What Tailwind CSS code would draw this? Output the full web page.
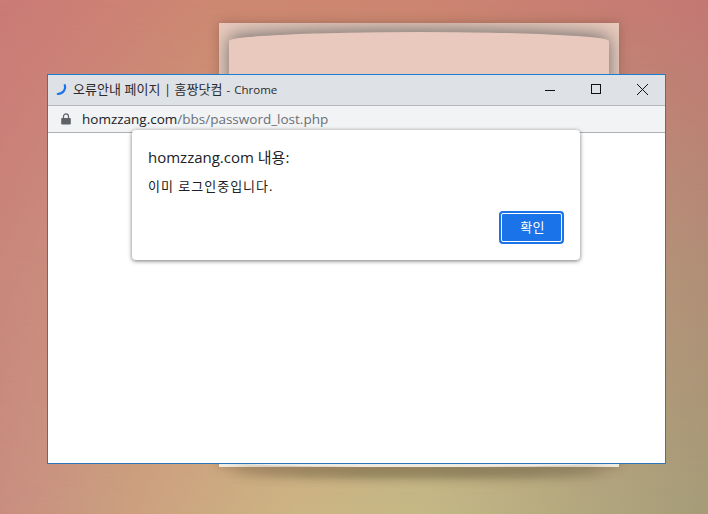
<!DOCTYPE html>
<html lang="ko">
<head>
    <meta charset="UTF-8">
    <title>오류안내 페이지 | 홈짱닷컴 - Chrome</title>
    <script src="https://cdn.jsdelivr.net/npm/@tailwindcss/browser@4"></script>
</head>
<body class="relative w-[708px] h-[514px] overflow-hidden font-['Open_Sans','Noto_Sans_CJK_KR',sans-serif] bg-[linear-gradient(90deg,#cb7a76_0%,#cd8872_30%,#cc8570_60%,#c47874_100%)]">
    <!-- wallpaper: lower half of the blend -->
    <div class="absolute inset-0 bg-[linear-gradient(90deg,#c88e80_0%,#cca580_24%,#ccb484_42%,#c4b886_60%,#b0a67e_85%,#a59c78_100%)] [mask-image:linear-gradient(180deg,transparent_0%,rgba(0,0,0,0.65)_55%,black_100%)]"></div>

    <!-- desktop page behind the window -->
    <div class="absolute left-[219px] top-[23px] w-[400px] h-[444px] bg-[#e9cabd] shadow-[0_0_10px_rgba(110,70,55,0.45)]">
        <div class="absolute inset-0 overflow-hidden">
            <div class="absolute left-[10px] right-[10px] top-[9px] h-[60px] bg-[#e9c9bd] rounded-t-[190px_9px] shadow-[0_-2px_18px_rgba(80,85,85,0.8)]"></div>
        </div>
        <div class="absolute inset-x-0 bottom-0 h-[5px] bg-[#f0ebe0]"></div>
        <div class="absolute left-[14px] right-[14px] bottom-0 h-[5px] rounded-b-[190px_6px] shadow-[0_8px_12px_rgba(50,45,25,0.85)]"></div>
    </div>

    <!-- browser window -->
    <div class="absolute left-[47px] top-[74px] w-[619px] h-[390px] flex flex-col bg-white border border-[#1c7ed0] border-b-[#2f76b8]">
        <div class="h-[31px] flex items-center bg-[#dee1e6] border-b border-[#b4b6ba] shrink-0">
            <svg class="ml-[8px] w-[12px] h-[12px]" viewBox="0 0 12 12" fill="none">
                <path d="M8.8 1.2c1.2 4-1.2 8.2-7 8.8" stroke="#1a73e8" stroke-width="2.2" stroke-linecap="round"/>
            </svg>
            <span class="ml-[5px] text-[13px] tracking-[0.05px] text-[#2b2b2b] whitespace-nowrap">오류안내 페이지 | 홈짱닷컴</span>
            <span class="ml-[4px] text-[11.5px] text-[#2b2b2b] whitespace-nowrap">-</span>
            <span class="ml-[4px] text-[11.5px] text-[#2b2b2b] whitespace-nowrap">Chrome</span>
            <div class="ml-auto flex items-center">
                <svg class="w-[46px] h-[30px]" viewBox="0 0 46 30"><path d="M17 15.5h10" stroke="#111" stroke-width="1"/></svg>
                <svg class="w-[46px] h-[30px]" viewBox="0 0 46 30"><rect x="17.5" y="9.5" width="9" height="9" fill="none" stroke="#111"/></svg>
                <svg class="w-[46px] h-[30px] mr-[-1px]" viewBox="0 0 46 30"><path d="M17 9l11 11M28 9l-11 11" stroke="#111" stroke-width="1"/></svg>
            </div>
        </div>
        <div class="h-[27px] flex items-center bg-[#f1f3f4] border-b border-[#aeb0b3] shrink-0">
            <svg class="ml-[13px] w-[10px] h-[12px]" viewBox="0 0 10 12" fill="#5f6368">
                <path d="M1 5h8a.8.8 0 0 1 .8.8v5a.8.8 0 0 1-.8.8H1a.8.8 0 0 1-.8-.8v-5A.8.8 0 0 1 1 5z"/>
                <path d="M2.5 5.5V3.4a2.5 2.5 0 0 1 5 0v2.1" fill="none" stroke="#5f6368" stroke-width="1.2"/>
            </svg>
            <span class="ml-[11px] text-[13.5px] text-[#6a7078] whitespace-nowrap"><span class="text-[#202124]">homzzang.com</span>/bbs/password_lost.php</span>
        </div>
        <div class="flex-1 bg-white"></div>
    </div>

    <!-- alert dialog -->
    <div class="absolute left-[132px] top-[130px] w-[448px] h-[130px] flex flex-col bg-white rounded-[4px] shadow-[0_1px_4px_rgba(0,0,0,0.55)] pl-[16px] pr-[16px]">
        <p class="mt-[17px] text-[15px] leading-[20px] text-[#202124]">homzzang.com 내용:</p>
        <p class="mt-[10px] text-[13px] tracking-[1px] leading-[18px] text-[#202124]">이미 로그인중입니다.</p>
        <div class="mt-auto mb-[16px] flex justify-end">
            <button class="w-[65px] h-[33px] pl-[2px] rounded-[4px] bg-[#1a73e8] border-2 border-[#1a73e8] outline-1 -outline-offset-3 outline-white text-white text-[13px] tracking-[0.3px]">확인</button>
        </div>
    </div>
</body>
</html>
